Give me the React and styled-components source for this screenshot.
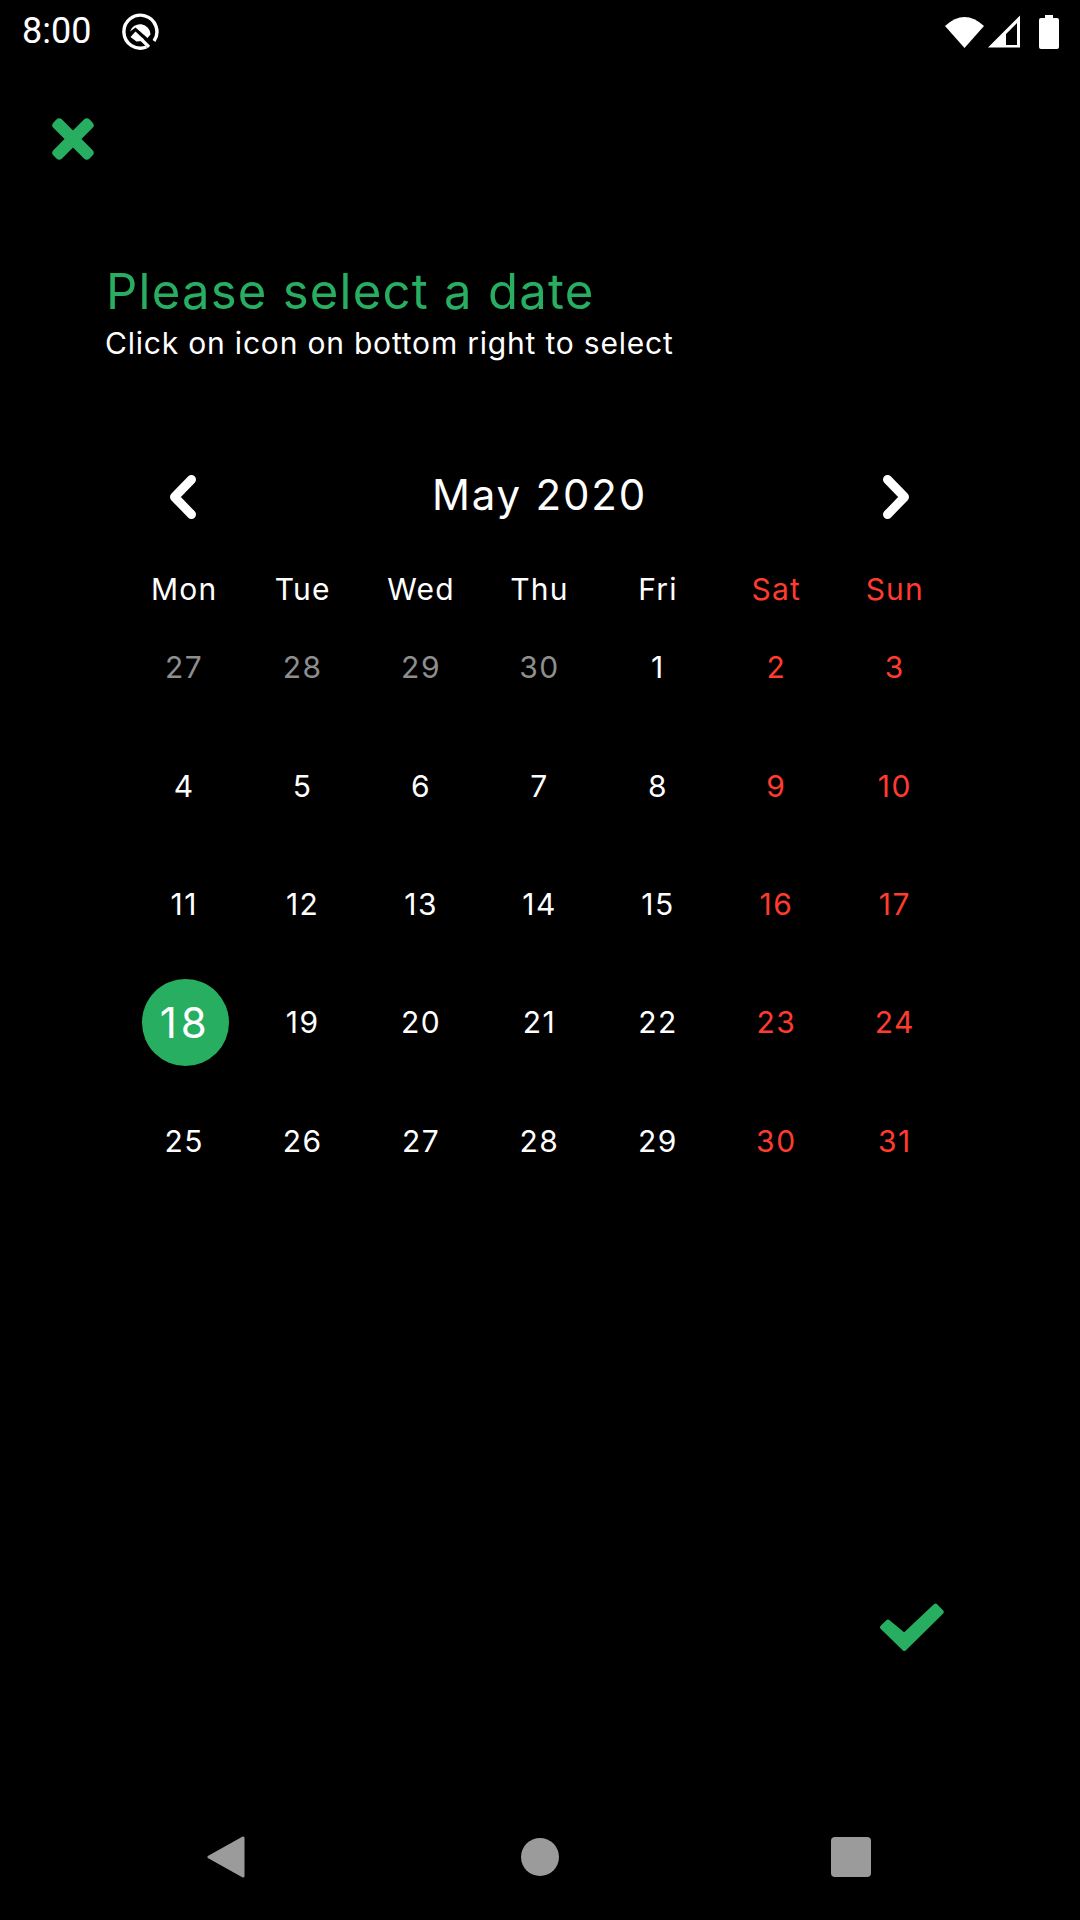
import React from "react";
import styled, { createGlobalStyle } from "styled-components";

const Global = createGlobalStyle`
  html, body { margin: 0; padding: 0; background: #000; }
  #root { width: 1080px; height: 1920px; }
`;
const FONT = `Inter, "Noto Sans", sans-serif`;
const GREEN = "#27ae60";
const RED = "#ff3b30";

const Page = styled.div`
  width: 1080px; height: 1920px; background: #000; color: #fff;
  display: flex; flex-direction: column; font-family: ${FONT}; overflow: hidden;
`;
const StatusBar = styled.div`
  height: 63px; display: flex; align-items: center; padding: 0 21px 0 22px;
  box-sizing: border-box; flex: none;
`;
const Clock = styled.span`
  font-family: Roboto, sans-serif; font-size: 36px; font-weight: 400; line-height: 63px; width: 99px;
`;
const Spacer = styled.div`flex: 1;`;
const StatusIcons = styled.div`display: flex; align-items: center; gap: 4px;`;
const Svg = styled.svg`display: block; flex: none;`;
const Battery = styled(Svg)`margin-left: 15px;`;
const NavArrow = styled(Svg)`margin-top: 4px;`;
const CloseRow = styled.div`padding: 54px 0 0 51px; height: 44px; flex: none;`;
const Heading = styled.div`padding: 100px 0 0 106px; flex: none;`;
const Title = styled.h1`
  margin: 0; color: ${GREEN}; font-size: 49px; font-weight: 400; line-height: 62px; letter-spacing: 1.25px;
`;
const Subtitle = styled.p`
  margin: 0 0 0 -1px; color: #fff; font-size: 30px; font-weight: 400; line-height: 40px; letter-spacing: 0.8px;
`;
const Calendar = styled.div`width: 829px; margin: 107px 0 0 125px; flex: none;`;
const MonthRow = styled.div`
  display: grid; grid-template-columns: repeat(7, 1fr); align-items: center; height: 46px; justify-items: center;
`;
const Month = styled.div`
  grid-column: 2 / 7; font-size: 42px; line-height: 48px; letter-spacing: 1.8px;
`;
const WeekRow = styled.div`
  display: grid; grid-template-columns: repeat(7, 1fr); margin-top: 50px; height: 46px; align-items: center;
`;
const WeekDay = styled.div`
  text-align: center; font-size: 30px; line-height: 46px; letter-spacing: 1.2px; color: ${p => (p.$weekend ? RED : "#fff")};
`;
const Days = styled.div`
  display: grid; grid-template-columns: repeat(7, 1fr); grid-auto-rows: 118.4px; margin-top: -4px;
`;
const Day = styled.div`
  display: flex; align-items: center; justify-content: center; font-size: 30px; letter-spacing: 1.5px;
  color: ${p => (p.$muted ? "#8e8e8e" : p.$weekend ? RED : "#fff")};
`;
const Selected = styled.span`
  width: 87px; height: 87px; border-radius: 50%; background: ${GREEN}; color: #fff; margin-left: 2px;
  display: flex; align-items: center; justify-content: center; font-size: 42px; letter-spacing: 4px;
`;
const Grow = styled.div`flex: 1; display: flex; justify-content: flex-end; align-items: flex-end; padding: 0 134px 0 0;`;
const ConfirmWrap = styled.div`padding-bottom: 142px;`;
const NavBar = styled.div`
  flex: none; height: 126px; box-sizing: border-box;
  display: grid; grid-template-columns: 207px 38px 276px 38px 272px 40px; align-items: center;
`;

const weeks = [
  [27, 28, 29, 30, 1, 2, 3],
  [4, 5, 6, 7, 8, 9, 10],
  [11, 12, 13, 14, 15, 16, 17],
  [18, 19, 20, 21, 22, 23, 24],
  [25, 26, 27, 28, 29, 30, 31],
];
const names = ["Mon", "Tue", "Wed", "Thu", "Fri", "Sat", "Sun"];

const Chevron = ({ dir }) => (
  <NavArrow width="30" height="46" viewBox="0 0 30 46">
    <path d={dir === "left" ? "M22.5 5.5 L5.5 23 L22.5 40.5" : "M7.5 5.5 L24.5 23 L7.5 40.5"} fill="none" stroke="#fff" strokeWidth="9" strokeLinecap="round" strokeLinejoin="round" />
  </NavArrow>
);

export default function App() {
  return (
    <Page>
      <Global />
      <StatusBar>
        <Clock>8:00</Clock>
        <Svg width="38" height="38" viewBox="0 0 38 38">
          <path d="M25.5 34 A16.5 16.5 0 1 1 33 28" fill="none" stroke="#fff" strokeWidth="3.4" />
          <path d="M9 18.5 A10.5 10.5 0 0 1 29.5 21.5 L26.5 25 L14.5 14.5 Z" fill="#fff" />
          <path d="M14.5 18.5 L9.5 24 L15.5 28.5 L21.5 28 L23 26.5 Z" fill="#fff" />
          <path d="M20 26 L28 34" stroke="#fff" strokeWidth="3.2" />
        </Svg>
        <Spacer />
        <StatusIcons>
          <Svg width="39" height="34" viewBox="0 0 39 34">
            <path d="M0 11 Q19.5 -7 39 11 L19.5 33 Z" fill="#fff" />
          </Svg>
          <Svg width="32" height="33" viewBox="0 0 32 33">
            <path fillRule="evenodd" d="M0 32.5 L32 0.5 L32 32.5 Z M18 30 L29 30 L29 8 L18 19 Z" fill="#fff" />
          </Svg>
          <Battery width="20" height="34" viewBox="0 0 20 34">
            <path d="M6 0 H14 V3 H18 A2 2 0 0 1 20 5 V32 A2 2 0 0 1 18 34 H2 A2 2 0 0 1 0 32 V5 A2 2 0 0 1 2 3 H6 Z" fill="#fff" />
          </Battery>
        </StatusIcons>
      </StatusBar>
      <CloseRow>
        <Svg width="44" height="44" viewBox="0 0 44 44">
          <g fill={GREEN} transform="rotate(45 22 22)">
            <rect x="-3.5" y="16" width="51" height="12" rx="4" />
            <rect x="16" y="-3.5" width="12" height="51" rx="4" />
          </g>
        </Svg>
      </CloseRow>
      <Heading>
        <Title>Please select a date</Title>
        <Subtitle>Click on icon on bottom right to select</Subtitle>
      </Heading>
      <Calendar>
        <MonthRow>
          <Chevron dir="left" />
          <Month>May 2020</Month>
          <Chevron dir="right" />
        </MonthRow>
        <WeekRow>
          {names.map((n, i) => <WeekDay key={n} $weekend={i > 4}>{n}</WeekDay>)}
        </WeekRow>
        <Days>
          {weeks.flatMap((w, r) =>
            w.map((d, c) => (
              <Day key={`${r}-${c}`} $muted={r === 0 && c < 4} $weekend={c > 4}>
                {d === 18 ? <Selected>{d}</Selected> : d}
              </Day>
            ))
          )}
        </Days>
      </Calendar>
      <Grow>
        <ConfirmWrap>
          <Svg width="68" height="50" viewBox="0 0 68 50">
            <path d="M10 19.5 L26.3 33 L57.5 3.5 L63.8 10 L26.3 47 L4 25.3 Z" fill={GREEN} stroke={GREEN} strokeWidth="4" strokeLinejoin="round" />
          </Svg>
        </ConfirmWrap>
      </Grow>
      <NavBar>
        <span />
        <Svg width="38" height="42" viewBox="0 0 38 42">
          <path d="M36 2 V40 L2 21 Z" fill="#9b9b9b" stroke="#9b9b9b" strokeWidth="3" strokeLinejoin="round" />
        </Svg>
        <span />
        <Svg width="38" height="38" viewBox="0 0 38 38"><circle cx="19" cy="19" r="19" fill="#9b9b9b" /></Svg>
        <span />
        <Svg width="40" height="40" viewBox="0 0 40 40"><rect width="40" height="40" rx="4" fill="#9b9b9b" /></Svg>
      </NavBar>
    </Page>
  );
}
